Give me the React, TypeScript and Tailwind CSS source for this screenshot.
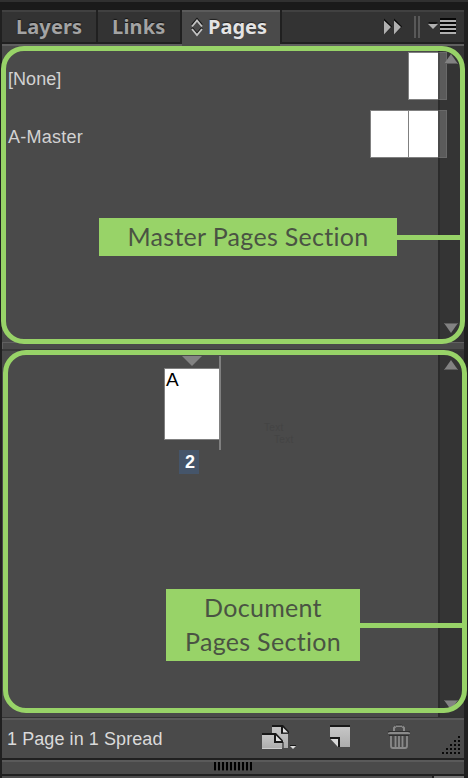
import type { ReactNode } from 'react';

function Tab({ children, className = '' }: { children: ReactNode; className?: string }) {
  return (
    <div
      className={`flex h-8 shrink-0 items-center border-t-2 border-[#414141] bg-[#333333] font-['Noto_Sans',sans-serif] text-[20px] font-bold leading-none text-[#a3a3a3] [text-shadow:0_-1px_1px_#151515] ${className}`}
    >
      {children}
    </div>
  );
}

function TabBar() {
  return (
    <div className="flex h-[34px] w-[462px] shrink-0 gap-[2px] bg-[#202020]">
      <Tab className="w-[94px] pl-[14px]"><span className="tracking-[0.1px]">Layers</span></Tab>
      <Tab className="w-[82px] pl-[14px]"><span className="tracking-[0.2px]">Links</span></Tab>
      <div className="flex h-9 w-[98px] shrink-0 items-center border-t-2 border-[#5b5b5b] bg-[#4a4a4a] pb-[4px] pl-[9px] font-['Noto_Sans',sans-serif] text-[20px] font-bold leading-none text-[#e4e4e4] [text-shadow:0_-1px_1px_#202020]">
        <svg width="12" height="20" viewBox="0 0 12 20" className="mr-[5px]" fill="none">
          <path d="M1 8 6 2l5 6M1 11l5 6 5-6" stroke="#151515" strokeWidth="2" />
          <path d="M1 9.5 6 3.5l5 6M1 12l5 6 5-6" stroke="#c4c4c4" strokeWidth="1.8" />
        </svg>
        <span>Pages</span>
      </div>
      <div className="flex h-8 grow items-center border-t-2 border-[#414141] bg-[#333333]">
        <svg width="182" height="30" viewBox="0 0 182 30">
          <path d="M102 6.5 110 14.5 102 22.5zM112 6.5 120 14.5 112 22.5z" fill="#080808" />
          <path d="M102 8.5 109 15 102 22.5zM112 8.5 119 15 112 22.5z" fill="#b0b0b0" />
          <path d="M132 4h2v22h-2zM136 4h2v22h-2z" fill="#585858" />
          <path d="M146 10h10l-5 4z" fill="#111" />
          <path d="M146 12h10l-5 5z" fill="#b0b0b0" />
          <path d="M158 6h16v2h-16zM158 10h16v2h-16zM158 14h16v2h-16zM158 18h16v2h-16z" fill="#080808" />
          <path d="M158 8h16v2h-16zM158 12h16v2h-16zM158 16h16v2h-16zM158 20h16v2h-16z" fill="#b0b0b0" />
        </svg>
      </div>
    </div>
  );
}

function Arrow({ down = false }: { down?: boolean }) {
  return (
    <svg width="14" height="10" viewBox="0 0 14 10" className="ml-[4px]">
      <path d={down ? 'M0 0h14L7 10z' : 'M0 10h14L7 0z'} fill="#828282" />
      <path d={down ? 'M0 .5h14' : 'M0 9.5h14'} stroke="#5e5e5e" />
    </svg>
  );
}

function MasterSection() {
  return (
    <div className="flex h-[296px] shrink-0">
      <div className="flex w-[436px] flex-col pt-[6px] font-['Liberation_Sans',Arial,sans-serif] text-[18px] text-[#d2d2d2]">
        <div className="flex h-12 items-center justify-between pl-[6px]">
          <span className="pt-[7px] tracking-[0.05px]">[None]</span>
          <div className="h-12 w-[30px] border border-r-0 border-[#808080] bg-white" />
        </div>
        <div className="mt-[10px] flex h-12 items-center justify-between pl-[6px]">
          <span className="pt-[7px] tracking-[0.25px]">A-Master</span>
          <div className="flex h-12">
            <div className="w-[38px] border border-r-0 border-[#808080] bg-white" />
            <div className="w-[30px] border border-r-0 border-[#808080] bg-white" />
          </div>
        </div>
      </div>
      <div className="flex w-[26px] flex-col border-l-2 border-[#2b2b2b] bg-[#343434]">
        <div className="relative h-[270px] pt-[8px]">
          <div className="absolute -left-[2px] top-[6px] h-12 w-[9px] border border-l-2 border-[#696969] border-l-[#4b4b4b] bg-[#5b5b5b]" />
          <div className="absolute -left-[2px] top-[64px] h-12 w-[9px] border border-l-2 border-[#696969] border-l-[#4b4b4b] bg-[#5b5b5b]" />
          <div className="relative"><Arrow /></div>
        </div>
        <div className="pt-[7px]"><Arrow down /></div>
      </div>
    </div>
  );
}

function DocumentSection() {
  return (
    <div className="flex h-[366px] shrink-0">
      <div className="flex w-[436px] items-start pl-[162px] pt-[4px]">
        <div className="flex w-[55px] flex-col">
          <svg width="20" height="10" viewBox="0 0 20 10" className="ml-[18px] mt-[1px]">
            <path d="M0 0h20L10 10z" fill="#828282" />
          </svg>
          <div className="mt-[2px] h-[72px] border border-r-0 border-[#808080] bg-white pl-[1px] font-['Liberation_Sans',Arial,sans-serif] text-[19px] leading-[21px] text-black">
            A
          </div>
          <div className="ml-[15px] mt-[10px] flex h-6 w-5 items-center justify-center bg-[#45556a] pl-[2px] font-['Liberation_Sans',Arial,sans-serif] text-[18px] font-bold text-white">
            2
          </div>
        </div>
        <div className="mt-[1px] h-[94px] w-[2px] bg-[#808080]" />
        <div className="ml-[43px] mt-[67px] font-['Liberation_Sans',sans-serif] text-[10px] leading-[12px] tracking-[0.3px] text-[#444444]">
          <div>Text</div>
          <div className="pl-[10px]">Text</div>
        </div>
      </div>
      <div className="flex w-[26px] flex-col justify-between border-l-2 border-[#2b2b2b] bg-[#343434] pb-[7px] pt-[9px]">
        <Arrow />
        <Arrow down />
      </div>
    </div>
  );
}

function Footer() {
  return (
    <div className="flex h-10 shrink-0 items-center border-t-2 border-[#5a5a5a] pl-[5px]">
      <span className="w-[247px] font-['Liberation_Sans',Arial,sans-serif] text-[18px] tracking-[0.08px] text-[#dadada]">
        1 Page in 1 Spread
      </span>
      <svg width="208" height="38" viewBox="254 720 208 38" className="ml-[1px] shrink-0">
        <defs>
          <linearGradient id="sheet" x1="0" y1="0" x2="0" y2="1">
            <stop stopColor="#c6c6c6" />
            <stop offset="1" stopColor="#acacac" />
          </linearGradient>
        </defs>
        <path d="M271 725h11l6 6.5v2h-17z" fill="#181818" />
        <path d="M271 727h9v7h7v14h-16z" fill="url(#sheet)" />
        <path d="M282 727.5 287 732.5h-5z" fill="#e2e2e2" />
        <path d="M261 733h14l7 7.5v2.5h-21z" fill="#181818" />
        <path d="M261 735h12v8h8v6h-20z" fill="url(#sheet)" />
        <path d="M275 735.5 280.5 741H275z" fill="#e2e2e2" />
        <path d="M282 742v6" stroke="#1b1b1b" />
        <path d="M261 748h20v1h-20z" fill="#cdcdcd" />
        <path d="M289 746h6l-3 3z" fill="#ddd" />
        <path d="M289 745.5h6" stroke="#181818" />
        <path d="M329 725h20v2h-20z" fill="#181818" />
        <path d="M329 727h20v20h-10v-10h-10z" fill="url(#sheet)" />
        <path d="M329 737h10v10h-2v-8h-8z" fill="#181818" />
        <path d="M329.5 739h7.5v8z" fill="#d8d8d8" />
        <path d="M393 731v-3l2-2h6l2 2v3" stroke="#8a8a8a" strokeWidth="2" fill="none" />
        <path d="M394 726.2 395.5 725h5l1.5 1.2M387 731.5h22" stroke="#303030" fill="none" />
        <path d="M387 734v-1l2-1h18l2 1v1z" fill="#8a8a8a" />
        <path d="M388 735.5h20" stroke="#303030" />
        <path d="M390 736v10q0 2 2 2h12q2 0 2-2v-10M394.5 736v11M398 736v11M401.5 736v11" stroke="#8a8a8a" strokeWidth="1.8" fill="none" />
        <path d="M457 736h2v2h-2zM453 740h2v2h-2zM457 740h2v2h-2zM449 744h2v2h-2zM453 744h2v2h-2zM457 744h2v2h-2zM445 748h2v2h-2zM449 748h2v2h-2zM453 748h2v2h-2zM457 748h2v2h-2zM441 752h2v2h-2zM445 752h2v2h-2zM449 752h2v2h-2zM453 752h2v2h-2zM457 752h2v2h-2z" fill="#080808" />
      </svg>
    </div>
  );
}

export default function App() {
  return (
    <div className="relative flex h-[778px] w-[468px] flex-col overflow-hidden bg-[#202020]">
      <div className="h-[2px] shrink-0 bg-[#303030]" />
      <div className="h-[8px] shrink-0 bg-[#1a1a1a]" />
      <div className="ml-[2px] flex w-[462px] flex-col bg-[#4a4a4a]">
        <TabBar />
        <div className="flex h-[2px] shrink-0">
          <div className="w-[180px] bg-[#5f5f5f]" />
          <div className="w-[98px] bg-[#4a4a4a]" />
          <div className="grow bg-[#5f5f5f]" />
        </div>
        <MasterSection />
        <div className="flex h-[9px] shrink-0 flex-col border-b-2 border-[#383838]">
          <div className="h-[7px] border-l border-t border-[#606060]" />
        </div>
        <DocumentSection />
        <div className="h-[1px] shrink-0 bg-[#333333]" />
        <Footer />
        <div className="h-[2px] shrink-0 bg-[#202020]" />
        <div className="flex h-[14px] shrink-0 justify-center border-t-2 border-[#5a5a5a]">
          <div className="mr-[1px] flex gap-[2px]">
            {Array.from({ length: 10 }, (_, i) => (
              <div key={i} className="h-[9px] w-[2px] border-b border-[#2c2c2c] bg-black" />
            ))}
          </div>
        </div>
        <div className="h-[2px] shrink-0 bg-[#202020]" />
        <div className="flex h-[2px] shrink-0 gap-[2px] bg-[#202020]">
          <div className="w-[430px] bg-[#4e4e4e]" />
          <div className="grow bg-[#777777]" />
        </div>
      </div>

      {/* Callouts drawn over the panel */}
      <div className="absolute left-[1px] top-[46px] h-[298px] w-[464px] rounded-[23px] border-[5px] border-[#98d368]" />
      <div className="absolute left-[3px] top-[350px] h-[363px] w-[464px] rounded-[23px] border-[5px] border-[#98d368]" />
      <div className="absolute left-[99px] top-[218px] flex h-[38px] items-center font-['Lato',sans-serif] text-[25px] text-[#4a5343]">
        <div className="flex h-full w-[298px] items-center justify-center bg-[#98d368]">
          <span className="whitespace-nowrap tracking-[0.3px]">Master Pages Section</span>
        </div>
        <div className="h-[5px] w-[64px] bg-[#98d368]" />
      </div>
      <div className="absolute left-[166px] top-[589px] flex h-[72px] items-center font-['Lato',sans-serif] text-[25px] leading-[34px] text-[#4a5343]">
        <div className="flex h-full w-[194px] flex-col items-center justify-center bg-[#98d368] pb-[2px]">
          <span className="tracking-[0.3px]">Document</span>
          <span className="whitespace-nowrap tracking-[0.3px]">Pages Section</span>
        </div>
        <div className="h-[5px] w-[103px] bg-[#98d368]" />
      </div>
    </div>
  );
}
